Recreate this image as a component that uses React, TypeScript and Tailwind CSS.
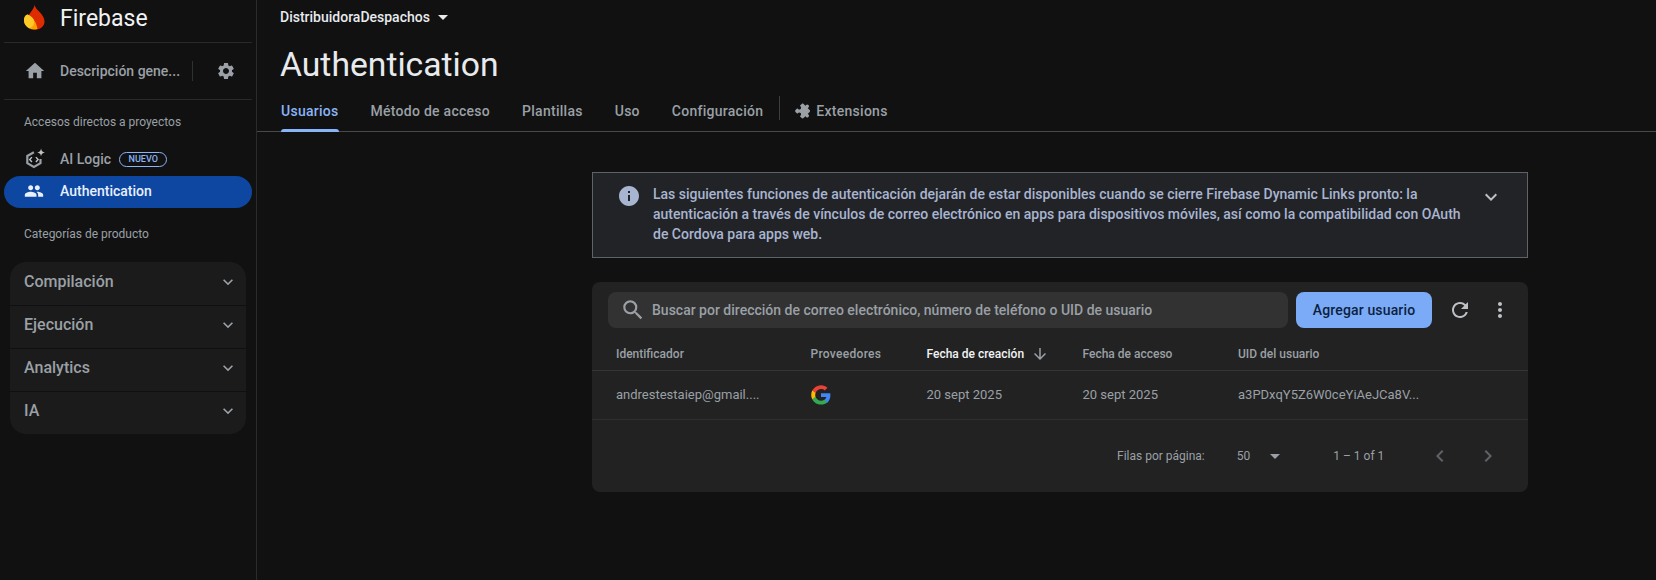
import React from 'react';
import {
  MdArrowDownward,
  MdArrowDropDown,
  MdChevronLeft,
  MdChevronRight,
  MdExpandMore,
  MdExtension,
  MdHome,
  MdInfo,
  MdMoreVert,
  MdPeople,
  MdRefresh,
  MdSearch,
  MdSettings,
} from 'react-icons/md';

const categories = ['Compilación', 'Ejecución', 'Analytics', 'IA'];
const tabs = ['Método de acceso', 'Plantillas', 'Uso', 'Configuración'];

function FirebaseLogo() {
  return (
    <svg width="21" height="26" viewBox="0 0 21 26" className="shrink-0">
      <path d="M10.500 1C11.500 6 20.500 10 20.500 17.500 20.500 22 16.500 25.500 11.500 25.500 6.500 25.500 3 22 3 16.500 3 10.500 9.500 7 10.500 1z" fill="#dd2c00" />
      <path d="M3.500 10.500C1.300 11.300 0 13.500 0 16c0 4.500 3.500 8.300 7.500 9.200 2.800.500 5.500.300 6-.200-1-6-4-11.500-10-14.500z" fill="#ffa000" />
      <path d="M3.500 10.500C1.300 11.300 0 13.500 0 16c0 3.700 2.400 6.900 5.500 8.300 3-1 4.800-3.600 4.500-6.800-.3-3-3-5.700-6.500-7z" fill="#ffca28" />
    </svg>
  );
}

function AiLogicIcon() {
  return (
    <svg width="22" height="22" viewBox="0 0 20 20" fill="none" className="shrink-0">
      <path d="M9 3.800 3 7.200v6.600l6 3.400 6-3.400V10" stroke="#9aa0a6" strokeWidth="2" />
      <path d="M7.200 8.300 5.200 10.500l2 2.200M10.800 8.300l2 2.200-2 2.200" stroke="#bdc1c6" strokeWidth="1.300" />
      <path d="M15.500 0.500c.3 2.200 1.300 3.200 3.500 3.500-2.200.3-3.200 1.300-3.500 3.500-.3-2.200-1.300-3.200-3.500-3.500 2.200-.3 3.200-1.300 3.500-3.500z" fill="#bdc1c6" />
    </svg>
  );
}

function GoogleIcon() {
  return (
    <svg width="20" height="20" viewBox="0 0 48 48">
      <path fill="#4285F4" d="M46.500 24.500c0-1.600-.1-3.100-.4-4.500H24v9h12.600c-.5 2.900-2.200 5.400-4.700 7v5.800h7.600c4.400-4.100 7-10.100 7-17.300z" />
      <path fill="#34A853" d="M24 47c6.300 0 11.600-2.100 15.500-5.700l-7.600-5.800c-2.100 1.400-4.800 2.200-7.900 2.200-6.100 0-11.200-4.100-13.100-9.600H3v6C6.900 41.800 14.800 47 24 47z" />
      <path fill="#FBBC05" d="M10.900 28.100c-.5-1.400-.7-2.900-.7-4.400s.3-3 .7-4.400v-6H3C1.400 16.500.500 20 .500 23.700S1.400 30.900 3 34.100l7.900-6z" />
      <path fill="#EA4335" d="M24 9.700c3.400 0 6.500 1.200 8.900 3.500l6.700-6.700C35.600 2.700 30.300.500 24 .500 14.800.500 6.900 5.700 3 13.300l7.900 6c1.900-5.500 7-9.600 13.100-9.600z" />
    </svg>
  );
}

export default function App() {
  return (
    <div className="flex h-[580px] w-[1656px] overflow-hidden bg-[#111111] font-['Roboto',sans-serif] text-[#9aa0a6]">
      <aside className="flex w-[257px] shrink-0 flex-col border-r border-[#2b2b2c]">
        <div className="mx-[4px] flex h-[43px] items-start border-b border-[#2a2a2b] pl-[20px] pt-[4px]">
          <FirebaseLogo />
          <span className="ml-[15px] mt-[1px] text-[23px] font-normal leading-[28px] text-[#f1f3f4]">Firebase</span>
        </div>
        <div className="mx-[4px] flex h-[57px] items-center border-b border-[#2a2a2b] pl-[20px]">
          <MdHome className="text-[#9aa0a6]" size={22} />
          <span className="ml-[14px] text-[14px] font-medium">Descripción gene...</span>
          <div className="ml-[12px] h-[20px] w-px bg-[#2f3032]" />
          <MdSettings className="ml-[23px] text-[#9aa0a6]" size={20} />
        </div>
        <div className="mt-[15px] pl-[24px] text-[12px] leading-[14px]">Accesos directos a proyectos</div>
        <div className="mt-[16px] flex h-[28px] items-center pl-[24px]">
          <AiLogicIcon />
          <span className="ml-[14px] text-[14px] font-medium">AI Logic</span>
          <span className="ml-[8px] rounded-full border border-[#8ab4f8] px-[8.500px] text-[9px] font-medium leading-[13px] text-[#8ab4f8]">NUEVO</span>
        </div>
        <div className="mx-[4px] mt-[3px] flex h-[32px] items-center rounded-full bg-[#0d47a1] pb-[2px] pl-[20px] text-[#e8f0fe]">
          <MdPeople size={20} />
          <span className="ml-[16px] text-[14px] font-medium">Authentication</span>
        </div>
        <div className="mt-[19px] pl-[24px] text-[12px] leading-[14px]">Categorías de producto</div>
        <div className="mx-[10px] mt-[21px] overflow-hidden rounded-[16px] bg-[#1b1b1b]">
          {categories.map((name, i) => (
            <div key={name} className={`flex h-[43px] items-center justify-between pl-[14px] pr-[8px] ${i > 0 ? 'border-t border-[#101010] pb-[4px]' : 'pb-[3px]'}`}>
              <span className="text-[16px] font-medium">{name}</span>
              <MdExpandMore size={20} />
            </div>
          ))}
        </div>
      </aside>

      <main className="min-w-0 flex-1">
        <div className="flex h-[34px] items-center pl-[23px] text-[14px] font-medium text-[#e8eaed]">
          DistribuidoraDespachos
          <MdArrowDropDown className="ml-[1px]" size={24} />
        </div>
        <h1 className="mt-[12px] pl-[23px] text-[33.700px] font-normal leading-[38px] text-[#e8eaed]">Authentication</h1>
        <nav className="mt-[13px] flex h-[35px] items-start border-b border-[#47494c] pl-[24px] text-[14px] font-medium tracking-[0.27px]">
          <div className="relative flex h-[34px] items-center pb-[6px] text-[#8ab4f8]">
            Usuarios
            <div className="absolute bottom-[-1px] left-0 right-0 h-[3px] rounded-t-[3px] bg-[#8ab4f8]" />
          </div>
          {tabs.map((tab) => (
            <div key={tab} className="ml-[32px] flex h-[34px] items-center pb-[6px]">{tab}</div>
          ))}
          <div className="ml-[16px] mt-[-1px] h-[24px] w-px bg-[#3c3e40]" />
          <div className="ml-[16px] flex h-[34px] items-center pb-[6px]">
            <MdExtension className="mr-[4px] rotate-45" size={16} />
            Extensions
          </div>
        </nav>

        <div className="ml-[335px] mt-[40px] w-[936px]">
          <div className="flex h-[86px] border border-[#5f6368] bg-[#222326] pl-[24px] pr-[24px] pt-[11px]">
            <MdInfo className="text-[#a8b5d1]" size={24} />
            <p className="ml-[12px] w-[810px] text-[14px] font-medium leading-[20px] text-[#a8b5d1]">
              Las siguientes funciones de autenticación dejarán de estar disponibles cuando se cierre Firebase Dynamic Links pronto: la autenticación a través de vínculos de correo electrónico en apps para dispositivos móviles, así como la compatibilidad con OAuth de Cordova para apps web.
            </p>
            <MdExpandMore className="ml-auto mt-[1px] text-[#bdc1c6]" size={24} />
          </div>

          <section className="mt-[24px] h-[210px] rounded-[8px] bg-[#222222]">
            <div className="flex items-center pl-[16px] pt-[10px]">
              <div className="flex h-[36px] w-[680px] items-center rounded-[8px] bg-[#323232] pl-[12px]">
                <MdSearch size={26} />
                <span className="ml-[6px] text-[14px] font-medium">Buscar por dirección de correo electrónico, número de teléfono o UID de usuario</span>
              </div>
              <button className="ml-[8px] h-[36px] w-[136px] rounded-[8px] bg-[#7baaf7] text-[14px] font-medium tracking-[0.15px] text-[#0b1f3f]">Agregar usuario</button>
              <MdRefresh className="ml-[16px] text-[#bdc1c6]" size={24} />
              <MdMoreVert className="ml-[16px] text-[#bdc1c6]" size={24} />
            </div>
            <div className="mt-[8px] grid h-[35px] grid-cols-[194.500px_116px_156px_155.500px_1fr] items-center border-b border-[#343536] pl-[24px] pt-[2px] text-[12px] font-medium">
              <span>Identificador</span>
              <span className="tracking-[0.3px]">Proveedores</span>
              <span className="flex items-center text-[#f1f3f4]">
                Fecha de creación
                <MdArrowDownward className="ml-[7px] text-[#9aa0a6]" size={18} />
              </span>
              <span>Fecha de acceso</span>
              <span>UID del usuario</span>
            </div>
            <div className="grid h-[49px] grid-cols-[194.500px_116px_156px_155.500px_1fr] items-center border-b border-[#2e2f30] pl-[24px] text-[13px]">
              <span>andrestestaiep@gmail....</span>
              <GoogleIcon />
              <span>20 sept 2025</span>
              <span>20 sept 2025</span>
              <span>a3PDxqY5Z6W0ceYiAeJCa8V...</span>
            </div>
            <div className="flex h-[72px] items-center pl-[525px] text-[12px]">
              <span>Filas por página:</span>
              <span className="ml-[32px]">50</span>
              <MdArrowDropDown className="ml-[13px]" size={24} />
              <span className="ml-[46px]">1 – 1 of 1</span>
              <MdChevronLeft className="ml-[44px] text-[#5f6368]" size={24} />
              <MdChevronRight className="ml-[24px] text-[#5f6368]" size={24} />
            </div>
          </section>
        </div>
      </main>
    </div>
  );
}
